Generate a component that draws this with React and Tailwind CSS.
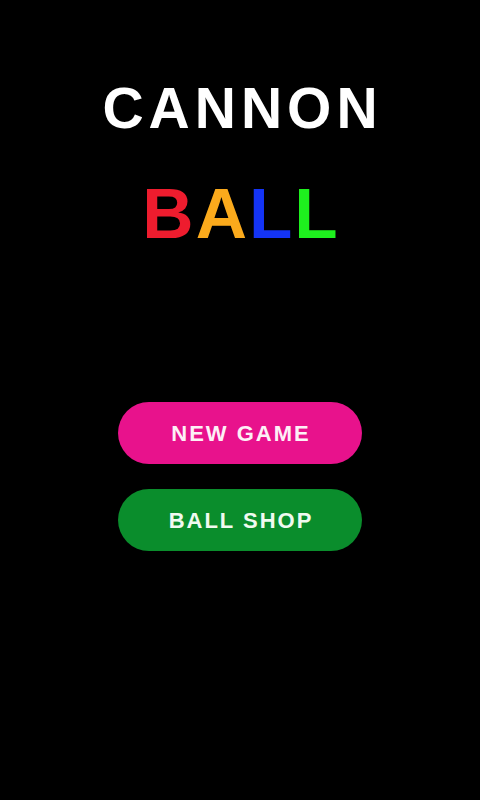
import React from "react";

const App = () => {
    const font = { fontFamily: '"Liberation Sans", Arial, sans-serif' };

    return (
        <div className="w-[480px] h-[800px] bg-black flex flex-col items-center" style={font}>
            {/* Title */}
            <h1 className="mt-[76px] text-[57px] leading-[64px] font-bold text-white tracking-[5px] pl-[5px]">
                CANNON
            </h1>
            <div className="mt-[34px] flex text-[71px] leading-[80px] font-bold tracking-[2px] pl-[2px]">
                <span className="text-[#ee1c2e]">B</span>
                <span className="text-[#fbaa1c]">A</span>
                <span className="text-[#1434f5]">L</span>
                <span className="text-[#1ef01e]">L</span>
            </div>

            {/* Menu */}
            <div className="mt-[148px] flex flex-col gap-[25px]">
                <button className="w-[244px] h-[62px] rounded-full bg-[#e8128c] text-[#fdf0f6] text-[22px] font-bold tracking-[2px] pl-[2px]">
                    NEW GAME
                </button>
                <button className="w-[244px] h-[62px] rounded-full bg-[#0a8d2c] text-[#f0faf0] text-[22px] font-bold tracking-[2px] pl-[2px]">
                    BALL SHOP
                </button>
            </div>
        </div>
    );
};

export default App;
